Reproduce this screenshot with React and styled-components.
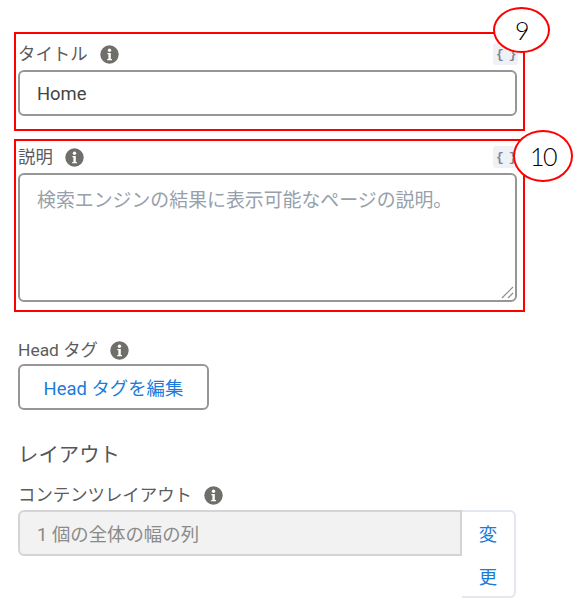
import styled, { createGlobalStyle } from 'styled-components';

const GlobalStyle = createGlobalStyle`
  html, body {
    margin: 0;
    padding: 0;
    background: #fff;
    font-family: Roboto, 'Noto Sans CJK JP', sans-serif;
  }
  * { box-sizing: border-box; }
`;

const Page = styled.div`
  position: relative;
  width: 582px;
  height: 604px;
  overflow: hidden;
  padding: 32px 0 0 14px;
`;

const Marked = styled.section`
  position: relative;
  width: 511px;
  height: ${(p) => p.$height}px;
  margin-bottom: 8px;
  border: 2px solid #ff0000;
  padding: 0 6px 0 2px;
`;

const LabelRow = styled.div`
  display: flex;
  align-items: center;
  justify-content: space-between;
  height: ${(p) => p.$height}px;
  padding-top: ${(p) => p.$top || 0}px;
`;

const PlainLabelRow = styled(LabelRow)`
  margin-top: 18px;
`;

const Label = styled.label`
  display: flex;
  align-items: center;
  gap: 12px;
  font-size: 17.4px;
  line-height: 20px;
  color: #5c5c5c;
`;

const InfoIcon = () => (
  <svg width="19" height="19" viewBox="0 0 19 19">
    <circle cx="9.5" cy="9.5" r="9.2" fill="#706e6b" />
    <circle cx="9.5" cy="5.2" r="1.7" fill="#fff" />
    <path d="M7.4 8h3.4v6h1.2v1.3H7.2V14h1.2V9.3h-1z" fill="#fff" />
  </svg>
);

const MergeButton = styled.span`
  display: flex;
  align-items: center;
  justify-content: center;
  width: 25px;
  height: 22px;
  margin-right: -1px;
  border-radius: 3px;
  background: #eef1f6;
  color: #7d8591;
  font: bold 13px 'Liberation Mono', monospace;
  letter-spacing: -1.5px;
`;

const TextInput = styled.div`
  display: flex;
  align-items: center;
  width: 499px;
  height: 46px;
  padding: 0 17px;
  border: 2px solid #969696;
  border-radius: 6px;
  font-size: 18.4px;
  color: #444;
`;

const TextArea = styled.div`
  position: relative;
  width: 499px;
  height: 129px;
  padding: 13px 17px;
  border: 2px solid #969696;
  border-radius: 6px;
  font-size: 18.9px;
  line-height: 26px;
  white-space: nowrap;
  color: #97a0ab;
`;

const Grip = styled.svg`
  position: absolute;
  right: 1px;
  bottom: 1px;
`;

const Plain = styled.div`
  padding-left: 4px;
`;

const OutlineButton = styled.button`
  display: block;
  width: 191px;
  height: 46px;
  padding: 0;
  border: 2px solid #969696;
  border-radius: 6px;
  background: #fff;
  color: #1b7bdc;
  font: inherit;
  font-size: 18.4px;
`;

const Heading = styled.h2`
  margin: 32px 0 17px;
  font-size: 20.4px;
  line-height: 26px;
  font-weight: 400;
  color: #555;
`;

const Combo = styled.div`
  display: flex;
  width: 498px;
  margin-top: 5px;
`;

const ReadOnly = styled.div`
  display: flex;
  align-items: center;
  width: 444px;
  height: 46px;
  padding: 0 17px;
  border: 2px solid #d4d4d4;
  border-radius: 6px 0 0 6px;
  background: #f2f2f2;
  font-size: 18.4px;
  color: #8a8a88;
`;

const ChangeButton = styled.button`
  display: block;
  width: 54px;
  height: 88px;
  padding: 1px 0 0;
  border: 2px solid #e2e7f0;
  border-left: 0;
  border-radius: 0 6px 6px 0;
  background: #fff;
  color: #1b7bdc;
  font: inherit;
  font-size: 18.4px;
  line-height: 43px;
`;

const Callout = styled.div`
  position: absolute;
  left: ${(p) => p.$x}px;
  top: ${(p) => p.$y}px;
  width: ${(p) => p.$w}px;
  height: ${(p) => p.$h}px;
  display: flex;
  align-items: center;
  justify-content: center;
  border: 2px solid #ff0000;
  border-radius: 50%;
  background: #fff;
  color: #000;
  font-family: Lato, sans-serif;
  font-weight: 300;
  font-size: 25px;
  letter-spacing: -1.5px;
`;

export default function App() {
  return (
    <Page>
      <GlobalStyle />
      <Marked $height={99}>
        <LabelRow $height={36} $top={4}>
          <Label>タイトル <InfoIcon /></Label>
          <MergeButton>{'{ }'}</MergeButton>
        </LabelRow>
        <TextInput>Home</TextInput>
      </Marked>
      <Marked $height={173}>
        <LabelRow $height={32}>
          <Label>説明 <InfoIcon /></Label>
          <MergeButton>{'{ }'}</MergeButton>
        </LabelRow>
        <TextArea>
          検索エンジンの結果に表示可能なページの説明。
          <Grip width="14" height="14" viewBox="0 0 14 14">
            <path d="M2 13 13 2M8 13l5-5" stroke="#8c8c8c" strokeWidth="1.2" fill="none" />
          </Grip>
        </TextArea>
      </Marked>
      <Plain>
        <PlainLabelRow $height={34} $top={6}>
          <Label>Head タグ <InfoIcon /></Label>
        </PlainLabelRow>
        <OutlineButton>Head タグを編集</OutlineButton>
        <Heading>レイアウト</Heading>
        <Label>コンテンツレイアウト <InfoIcon /></Label>
        <Combo>
          <ReadOnly>1 個の全体の幅の列</ReadOnly>
          <ChangeButton>変<br />更</ChangeButton>
        </Combo>
      </Plain>
      <Callout $x={493} $y={7} $w={57} $h={46}>9</Callout>
      <Callout $x={513} $y={130} $w={60} $h={52}>10</Callout>
    </Page>
  );
}
